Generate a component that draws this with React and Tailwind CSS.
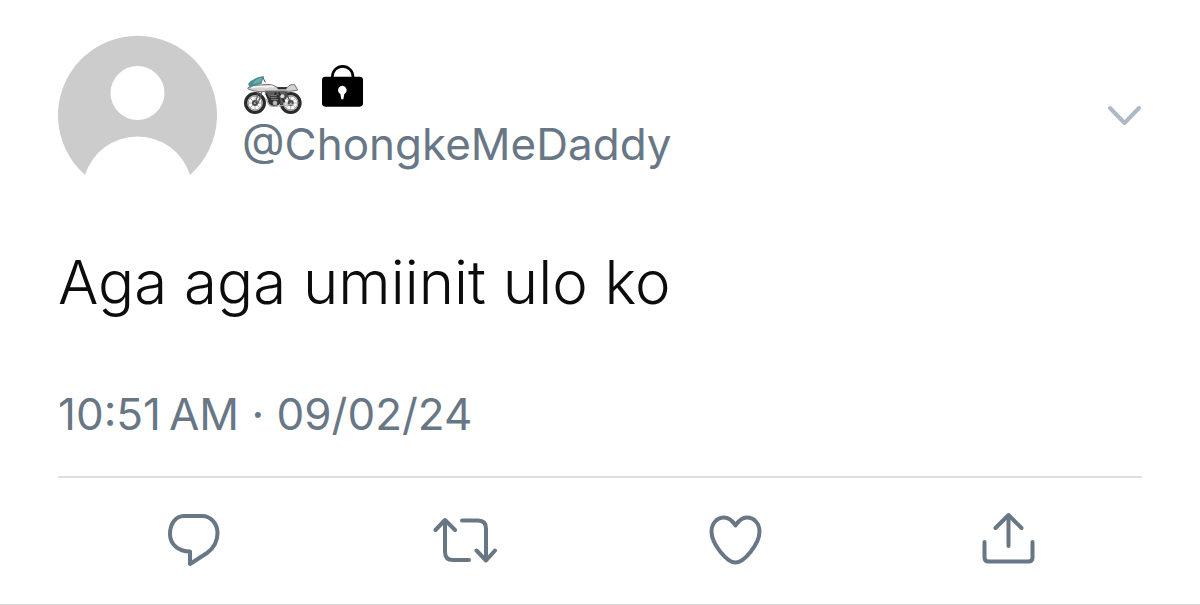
const TWEET = {
  handle: '@ChongkeMeDaddy',
  text: 'Aga aga umiinit ulo ko',
  time: '10:51\u202FAM',
  date: '09/02/24',
}

const ACTIONS = [
  {
    label: 'Reply',
    d: 'M22 8H40C49 8 55.5 16 55.5 25C55.5 34 52 40 45 45L28 56V43.5C16 43.5 8 36 8 26C8 16 13.5 8 22 8Z',
  },
  {
    label: 'Retweet',
    d: 'M2.5 22L12 12L22 22M12 13V44Q12 52 20 52H36M29 12.5H45Q53 12.5 53 20.5V52M43.5 42.5L53 52.5L62 42.5',
  },
  {
    label: 'Like',
    d: 'M31.5 17.5C28 12 24 9.5 20 9.5C13 9.5 7.5 15.5 7.5 23.5C7.5 36 23 54.5 31.5 54.5C40 54.5 55.5 36 55.5 23.5C55.5 15.5 50 9.5 43 9.5C39 9.5 35 12 31.5 17.5Z',
  },
  {
    label: 'Share',
    d: 'M20.5 20L33.5 7L46.5 20M33.5 7V38M9.5 34V49.5Q9.5 53.5 13.5 53.5H53.5Q57.5 53.5 57.5 49.5V34',
  },
]

function Avatar() {
  return (
    <svg viewBox="0 0 160 142" className="w-40 shrink-0" role="img" aria-label="Profile picture">
      <path
        fill="#cccccc"
        fillRule="evenodd"
        d="M27 141A79.5 79.5 0 1 1 132 141A55 55 0 0 0 27 141ZM79.5 32A27 27 0 1 0 79.5 86A27 27 0 1 0 79.5 32Z"
      />
    </svg>
  )
}

function Wheel({ cx, cy }) {
  return (
    <g>
      <circle cx={cx} cy={cy} r="28" fill="#fff" stroke="#2b2b2b" strokeWidth="10" />
      <circle cx={cx} cy={cy} r="21" fill="none" stroke="#8a8a8a" strokeWidth="3" />
      <path
        d={`M${cx - 22} ${cy}h44M${cx} ${cy - 22}v44M${cx - 16} ${cy - 16}l32 32M${cx + 16} ${cy - 16}l-32 32`}
        stroke="#8b8b8b"
        strokeWidth="2"
      />
      <circle cx={cx} cy={cy} r="9" fill="#4a4a4a" />
      <circle cx={cx} cy={cy} r="3" fill="#c8c8c8" />
    </g>
  )
}

function Motorcycle() {
  return (
    <svg viewBox="28 60 174 120" className="w-[58px]" role="img" aria-label="Motorcycle">
      <Wheel cx={61} cy={144} />
      <Wheel cx={168} cy={144} />
      <path d="M76 98L62 144M84 102L70 146" stroke="#666" strokeWidth="4" />
      <path d="M88 104H150L160 122L142 148H104Z" fill="#5c5c5c" />
      <path d="M94 116L110 146L124 112M132 112L150 142" fill="none" stroke="#262626" strokeWidth="5" />
      <path d="M108 120H134L138 144L126 154H108L100 140Z" fill="#303030" />
      <path d="M108 122H126M108 128H126M110 134H130" stroke="#b5b5b5" strokeWidth="2" />
      <circle cx="121" cy="144" r="7" fill="#b7b7b7" />
      <circle cx="143" cy="124" r="6" fill="#ddd" />
      <path d="M96 132Q98 154 118 154L176 148" fill="none" stroke="#aaa" strokeWidth="4" />
      <path d="M150 106L168 143M158 106L150 132" stroke="#4a4a4a" strokeWidth="4" />
      <path
        d="M40 98Q56 88 80 90Q108 84 128 97L158 98Q164 87 180 89L189 105Q170 111 148 108L96 108Q72 114 40 102Z"
        fill="#d2d2d2"
        stroke="#757575"
        strokeWidth="3"
      />
      <path d="M50 98Q72 92 100 96Q110 91 118 97" fill="none" stroke="#fafafa" strokeWidth="4" />
      <path d="M126 97H158L154 103H130Z" fill="#292929" />
      <path d="M40 87Q58 66 88 63L80 88Q60 90 46 98Z" fill="#468f92" />
      <path d="M58 79Q70 69 84 67L78 82Q68 84 55 88Z" fill="#6ca9a9" />
      <path d="M84 66L92 82" stroke="#555" strokeWidth="3" />
    </svg>
  )
}

function Lock() {
  return (
    <svg viewBox="260 27 126 126" className="w-[42px]" role="img" aria-label="Protected account">
      <path d="M291 65V62A31 31 0 0 1 353 62V65" fill="none" stroke="#000" strokeWidth="8" />
      <rect x="260" y="62" width="123" height="90" rx="10" fill="#000" />
      <path d="M315 114A13 13 0 1 1 327 114L324 130H318Z" fill="#fff" />
    </svg>
  )
}

export default function App() {
  return (
    <article className="border-b border-[#d6d6d6] bg-white px-[58px] pt-[34px] font-['Inter',sans-serif] text-[#687785]">
      <header className="flex items-start">
        <Avatar />
        <div className="min-w-0 flex-1 pt-[31px] pl-6">
          <div className="flex items-end gap-5 pl-0.5">
            <Motorcycle />
            <div className="pb-2">
              <Lock />
            </div>
          </div>
          <a href="#profile" className="block text-[44px] leading-[58px]">{TWEET.handle}</a>
        </div>
        <button type="button" aria-label="More options" className="mt-[70px]">
          <svg
            viewBox="0 0 36 24"
            className="w-9"
            fill="none"
            stroke="#aeb9c3"
            strokeWidth="4"
            strokeLinecap="round"
            strokeLinejoin="round"
          >
            <path d="M4 4L18.5 19L33 4" />
          </svg>
        </button>
      </header>

      <p className="mt-[66px] text-[60px] leading-[80px] font-light text-[#0c0c0c]">{TWEET.text}</p>

      <p className="mt-[62px] text-[44px] leading-[60px]">
        <time>{TWEET.time} · {TWEET.date}</time>
      </p>

      <div className="mt-8 grid grid-cols-4 border-t-2 border-[#dfdfdf] pt-[30px] pb-8">
        {ACTIONS.map((action) => (
          <button key={action.label} type="button" aria-label={action.label} className="justify-self-center">
            <svg
              viewBox="0 0 64 64"
              className="size-16"
              fill="none"
              stroke="currentColor"
              strokeWidth="4"
              strokeLinecap="round"
              strokeLinejoin="round"
            >
              <path d={action.d} />
            </svg>
          </button>
        ))}
      </div>
    </article>
  )
}
